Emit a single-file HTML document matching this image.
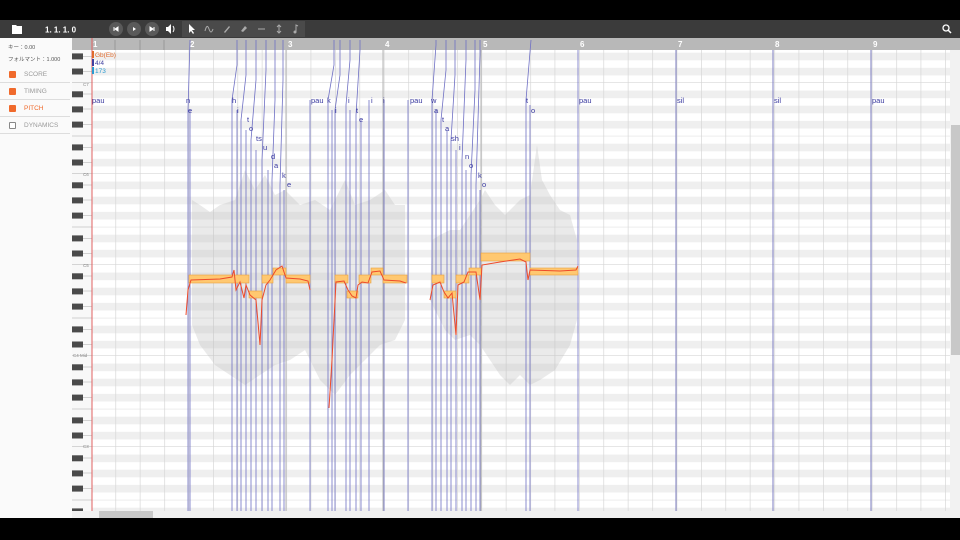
<!DOCTYPE html>
<html><head><meta charset="utf-8"><style>
*{margin:0;padding:0;box-sizing:border-box}
body{width:960px;height:540px;background:#000;position:relative;overflow:hidden;font-family:"Liberation Sans","Noto Sans CJK JP",sans-serif}
#tb{position:absolute;left:0;top:20px;width:960px;height:18px;background:#3b3b3b}
#lp{position:absolute;left:0;top:38px;width:72px;height:480px;background:#fafafa}
.row{position:absolute;left:0;width:70px;height:17px;border-bottom:1px solid #ddd;font-size:6.5px;color:#999;line-height:17px;padding-left:24px}
.cb{position:absolute;left:9px;top:5px;width:7px;height:7px;background:#f06a2c;border-radius:1px}
.cb.off{background:#fff;border:1px solid #888}
svg{position:absolute;left:0;top:0}
</style></head><body>
<div id="tb">
<svg width="960" height="18" style="position:absolute;left:0;top:0">
<path d="M12 5h4l1 1h5v8h-10z" fill="#fff"/>
<text x="45" y="12.5" fill="#fff" font-size="8" font-weight="bold" font-family="Liberation Sans">1.  1.  1.  0</text>
<circle cx="116" cy="9" r="7" fill="#5a5a5a"/><circle cx="134" cy="9" r="7" fill="#5a5a5a"/><circle cx="152" cy="9" r="7" fill="#5a5a5a"/>
<path d="M114 7v4M115 9l3-2v4z" stroke="#fff" fill="#fff" stroke-width="1"/>
<path d="M133 7l3 2-3 2z" fill="#fff"/>
<path d="M150 7l3 2-3 2zM154 7v4" stroke="#fff" fill="#fff" stroke-width="1"/>
<path d="M166 7h2l3-3v10l-3-3h-2z" fill="#fff"/><path d="M173 6q2 3 0 6" stroke="#fff" fill="none"/>
<rect x="182" y="1" width="123" height="16" fill="#4a4a4a"/>
<path d="M189 4v9l2-2 2 3 1-1-2-3h3z" fill="#fff"/>
<path d="M205 11q2-8 4-2t4 0" stroke="#aaa" fill="none"/>
<path d="M224 12l5-6 1 1-5 6z" fill="#aaa"/>
<path d="M241 11l4-5 2 2-4 4z" fill="#aaa"/>
<path d="M258 9h7" stroke="#aaa"/>
<path d="M279 5v8M277 7l2-2 2 2M277 11l2 2 2-2" stroke="#aaa" fill="none"/>
<path d="M296 12v-7l2 1" stroke="#aaa" fill="none"/><circle cx="295" cy="12" r="1.5" fill="#aaa"/>
<circle cx="946" cy="8" r="3" stroke="#fff" fill="none" stroke-width="1.3"/><path d="M948 10l3 3" stroke="#fff" stroke-width="1.5"/>
</svg></div>
<div id="lp">
<div style="position:absolute;left:8px;top:5px;font-size:5.5px;color:#555">キー：0.00</div>
<div style="position:absolute;left:8px;top:17px;font-size:5.5px;color:#555">フォルマント：1.000</div>
<div class="row" style="top:28px"><div class="cb"></div>SCORE</div>
<div class="row" style="top:45px"><div class="cb"></div>TIMING</div>
<div class="row" style="top:62px;color:#f06a2c"><div class="cb"></div>PITCH</div>
<div class="row" style="top:79px"><div class="cb off"></div>DYNAMICS</div>
</div>
<svg width="960" height="540" style="top:0">
<defs>
<pattern id="oct" x="0" y="-8" width="900" height="91" patternUnits="userSpaceOnUse">
<rect width="900" height="91" fill="#fff"/>
<g fill="#efefef">
<rect y="7.6" width="900" height="7.6"/><rect y="22.7" width="900" height="7.6"/><rect y="37.9" width="900" height="7.6"/>
<rect y="60.7" width="900" height="7.6"/><rect y="75.8" width="900" height="7.6"/></g>
<line x1="0" x2="900" y1="53.1" y2="53.1" stroke="#e2e2e2" stroke-width="0.6"/>
<line x1="0" x2="900" y1="90.8" y2="90.8" stroke="#d8d8d8" stroke-width="0.8"/>
</pattern>
<pattern id="keys" x="72" y="-8" width="20" height="91" patternUnits="userSpaceOnUse">
<rect width="20" height="91" fill="#f8f8f8"/>
<g fill="#4a4a4a"><rect y="8.3" width="11" height="6"/><rect y="23.4" width="11" height="6"/><rect y="38.6" width="11" height="6"/><rect y="61.4" width="11" height="6"/><rect y="76.5" width="11" height="6"/></g>
<g stroke="#aaa" stroke-width="0.5"><line x1="11" x2="20" y1="11" y2="11"/><line x1="11" x2="20" y1="26" y2="26"/><line x1="11" x2="20" y1="41.5" y2="41.5"/><line x1="0" x2="20" y1="53" y2="53"/><line x1="11" x2="20" y1="64.5" y2="64.5"/><line x1="11" x2="20" y1="79.5" y2="79.5"/><line x1="0" x2="20" y1="90.8" y2="90.8"/></g>
</pattern>
<pattern id="beats" x="91" y="0" width="24.4" height="10" patternUnits="userSpaceOnUse"><line x1="0.3" x2="0.3" y1="0" y2="10" stroke="#d4d4d4" stroke-width="0.7"/></pattern>
</defs>
<rect x="72" y="50" width="20" height="468" fill="url(#keys)"/>
<rect x="92" y="50" width="858" height="468" fill="url(#oct)"/>
<rect x="92" y="50" width="858" height="468" fill="url(#beats)"/>
<g font-size="4.5" fill="#888"><text x="83" y="86">C7</text><text x="83" y="176">C6</text><text x="83" y="267">C5</text><text x="73" y="357">C4 Mid</text><text x="83" y="448">C3</text></g>
<!-- waveform -->
<g fill="#bbb" opacity="0.3">
<path d="M192 200L200 205L210 212L220 205L235 200L245 170L255 190L265 175L275 195L285 190L300 205L315 200L330 210L345 180L355 205L370 200L385 190L395 205L405 205L405 320L395 340L380 345L365 360L350 375L335 395L320 380L305 350L290 360L275 365L260 375L245 385L230 375L215 365L200 345L192 325Z"/>
<path d="M430 300L435 310L445 330L455 340L470 335L480 345L490 360L500 375L510 385L520 375L530 385L540 380L555 370L570 345L577 320L577 240L570 215L560 210L550 195L542 180L537 145L530 195L520 200L505 215L495 205L485 190L480 200L470 215L460 230L450 230L440 235L432 240Z"/>
</g>
<!-- measure lines -->
<g stroke="#b5b5b5" stroke-width="1"><line x1="286" x2="286" y1="50" y2="518"/><line x1="383" x2="383" y1="50" y2="518"/><line x1="481" x2="481" y1="50" y2="518"/><line x1="676" x2="676" y1="50" y2="518"/><line x1="773" x2="773" y1="50" y2="518"/><line x1="871" x2="871" y1="50" y2="518"/></g>
<!-- ruler -->
<rect x="72" y="38" width="888" height="12" fill="#b8b8b8"/>
<g stroke="#999"><line x1="115" x2="115" y1="40" y2="50"/><line x1="140" x2="140" y1="40" y2="50"/><line x1="164" x2="164" y1="40" y2="50"/></g>
<g fill="#fff" font-size="8" font-weight="bold"><text x="93" y="47">1</text><text x="190" y="47">2</text><text x="288" y="47">3</text><text x="385" y="47">4</text><text x="483" y="47">5</text><text x="580" y="47">6</text><text x="678" y="47">7</text><text x="775" y="47">8</text><text x="873" y="47">9</text></g>
<!-- phoneme lines -->
<g stroke="#6f70c4" stroke-width="0.8" fill="none">
<path d="M188 512V110L190 40M190 512V110"/>
<path d="M232 512V100L237 65V40M237 512V110"/>
<path d="M241 512V120L246 75V40M246 512V130"/>
<path d="M251 512V140L256 80V40M256 512V150"/>
<path d="M262 512V160L266 70V40M268 512V170"/>
<path d="M272 512V180L275 100V40M280 512V185L283 80V40M284 512V190"/>
<path d="M310 512V100"/>
<path d="M328 512V100L334 65V40M332 512V110"/>
<path d="M335 512V110L340 75V40M346 512V105L350 60V40M350 512V110"/>
<path d="M356 512V115L360 50V40M361 512V120"/>
<path d="M369 512V100M384 512V100"/>
<path d="M408 512V100"/>
<path d="M432 512V100L436 45V40M436 512V110"/>
<path d="M441 512V120L446 70V40M447 512V130"/>
<path d="M451 512V140L455 75V40M456 512V150"/>
<path d="M462 512V160L466 60V40M466 512V170"/>
<path d="M471 512V175L475 90V40M476 512V185L480 55V40M480 512V190"/>
<path d="M526 512V100L531 40M530 512V105"/>
<path d="M578 512V50"/>
<path d="M676 512V50M773 512V50M871 512V50"/>
</g>
<line x1="92" y1="38" x2="92" y2="518" stroke="#e06060" stroke-width="1"/>
<g font-size="6.5"><text x="95" y="57" fill="#e06a2c">Gb(Eb)</text><text x="95" y="65" fill="#4040a0">4/4</text><text x="95" y="73" fill="#2a9ad0">173</text></g>
<rect x="92" y="51" width="2" height="7" fill="#e06a2c"/><rect x="92" y="59" width="2" height="7" fill="#4040a0"/><rect x="92" y="67" width="2" height="7" fill="#2a9ad0"/>
<g font-size="7.5" fill="#3a3aa0">
<text x="92" y="103">pau</text><text x="186" y="103">n</text><text x="188" y="113">e</text>
<text x="232" y="103">h</text><text x="237" y="113">i</text><text x="247" y="122">t</text><text x="249" y="131">o</text><text x="256" y="141">ts</text><text x="263" y="150">u</text><text x="271" y="159">d</text><text x="274" y="168">a</text><text x="282" y="178">k</text><text x="287" y="187">e</text>
<text x="311" y="103">pau</text><text x="327" y="103">k</text><text x="335" y="113">i</text><text x="348" y="103">i</text><text x="356" y="113">t</text><text x="359" y="122">e</text><text x="371" y="103">i</text><text x="383" y="103">i</text>
<text x="410" y="103">pau</text><text x="431" y="103">w</text><text x="434" y="113">a</text><text x="442" y="122">t</text><text x="445" y="131">a</text><text x="451" y="141">sh</text><text x="459" y="150">i</text><text x="465" y="159">n</text><text x="469" y="168">o</text><text x="478" y="178">k</text><text x="482" y="187">o</text>
<text x="526" y="103">t</text><text x="531" y="113">o</text>
<text x="579" y="103">pau</text><text x="677" y="103">sil</text><text x="774" y="103">sil</text><text x="872" y="103">pau</text>
</g>
<!-- notes -->
<g fill="#ffc870" stroke="#e8a040" stroke-width="0.6">
<rect x="189" y="275" width="60" height="8"/><rect x="249" y="291" width="13" height="7"/><rect x="262" y="275" width="11" height="8"/><rect x="273" y="268" width="13" height="7"/><rect x="286" y="275" width="24" height="8"/>
<rect x="335" y="275" width="13" height="8"/><rect x="347" y="291" width="11" height="7"/><rect x="359" y="275" width="12" height="8"/><rect x="371" y="268" width="12" height="7"/><rect x="383" y="275" width="24" height="8"/>
<rect x="432" y="275" width="12" height="8"/><rect x="444" y="291" width="12" height="7"/><rect x="456" y="275" width="13" height="8"/><rect x="469" y="268" width="12" height="7"/><rect x="481" y="253" width="49" height="8"/><rect x="530" y="268" width="48" height="7"/>
</g>
<g stroke="#ee4a2a" stroke-width="1" fill="none">
<path d="M186 315L188 290L191 280L220 279L232 277L234 270L236 290L240 282L244 298L246 285L250 295L256 300L260 345L262 300L266 285L270 280L276 270L282 266L286 278L300 279L308 281L310 290"/>
<path d="M329 408L332 360L334 320L336 282L344 281L348 290L352 296L356 298L358 285L362 282L368 283L372 272L380 271L384 280L400 281L406 283"/>
<path d="M430 300L433 285L440 282L444 292L448 298L452 293L456 335L458 285L464 282L468 272L476 272L480 300L482 265L500 262L520 259L526 262L528 280L530 270L560 271L576 270L578 266"/>
</g>
<!-- scrollbars -->
<rect x="950" y="50" width="10" height="468" fill="#f2f2f2"/><rect x="951" y="125" width="9" height="230" fill="#c8c8c8"/>
<rect x="72" y="511" width="878" height="7" fill="#f0f0f0"/><rect x="99" y="511" width="54" height="7" fill="#c8c8c8"/>
</svg>
</body></html>
